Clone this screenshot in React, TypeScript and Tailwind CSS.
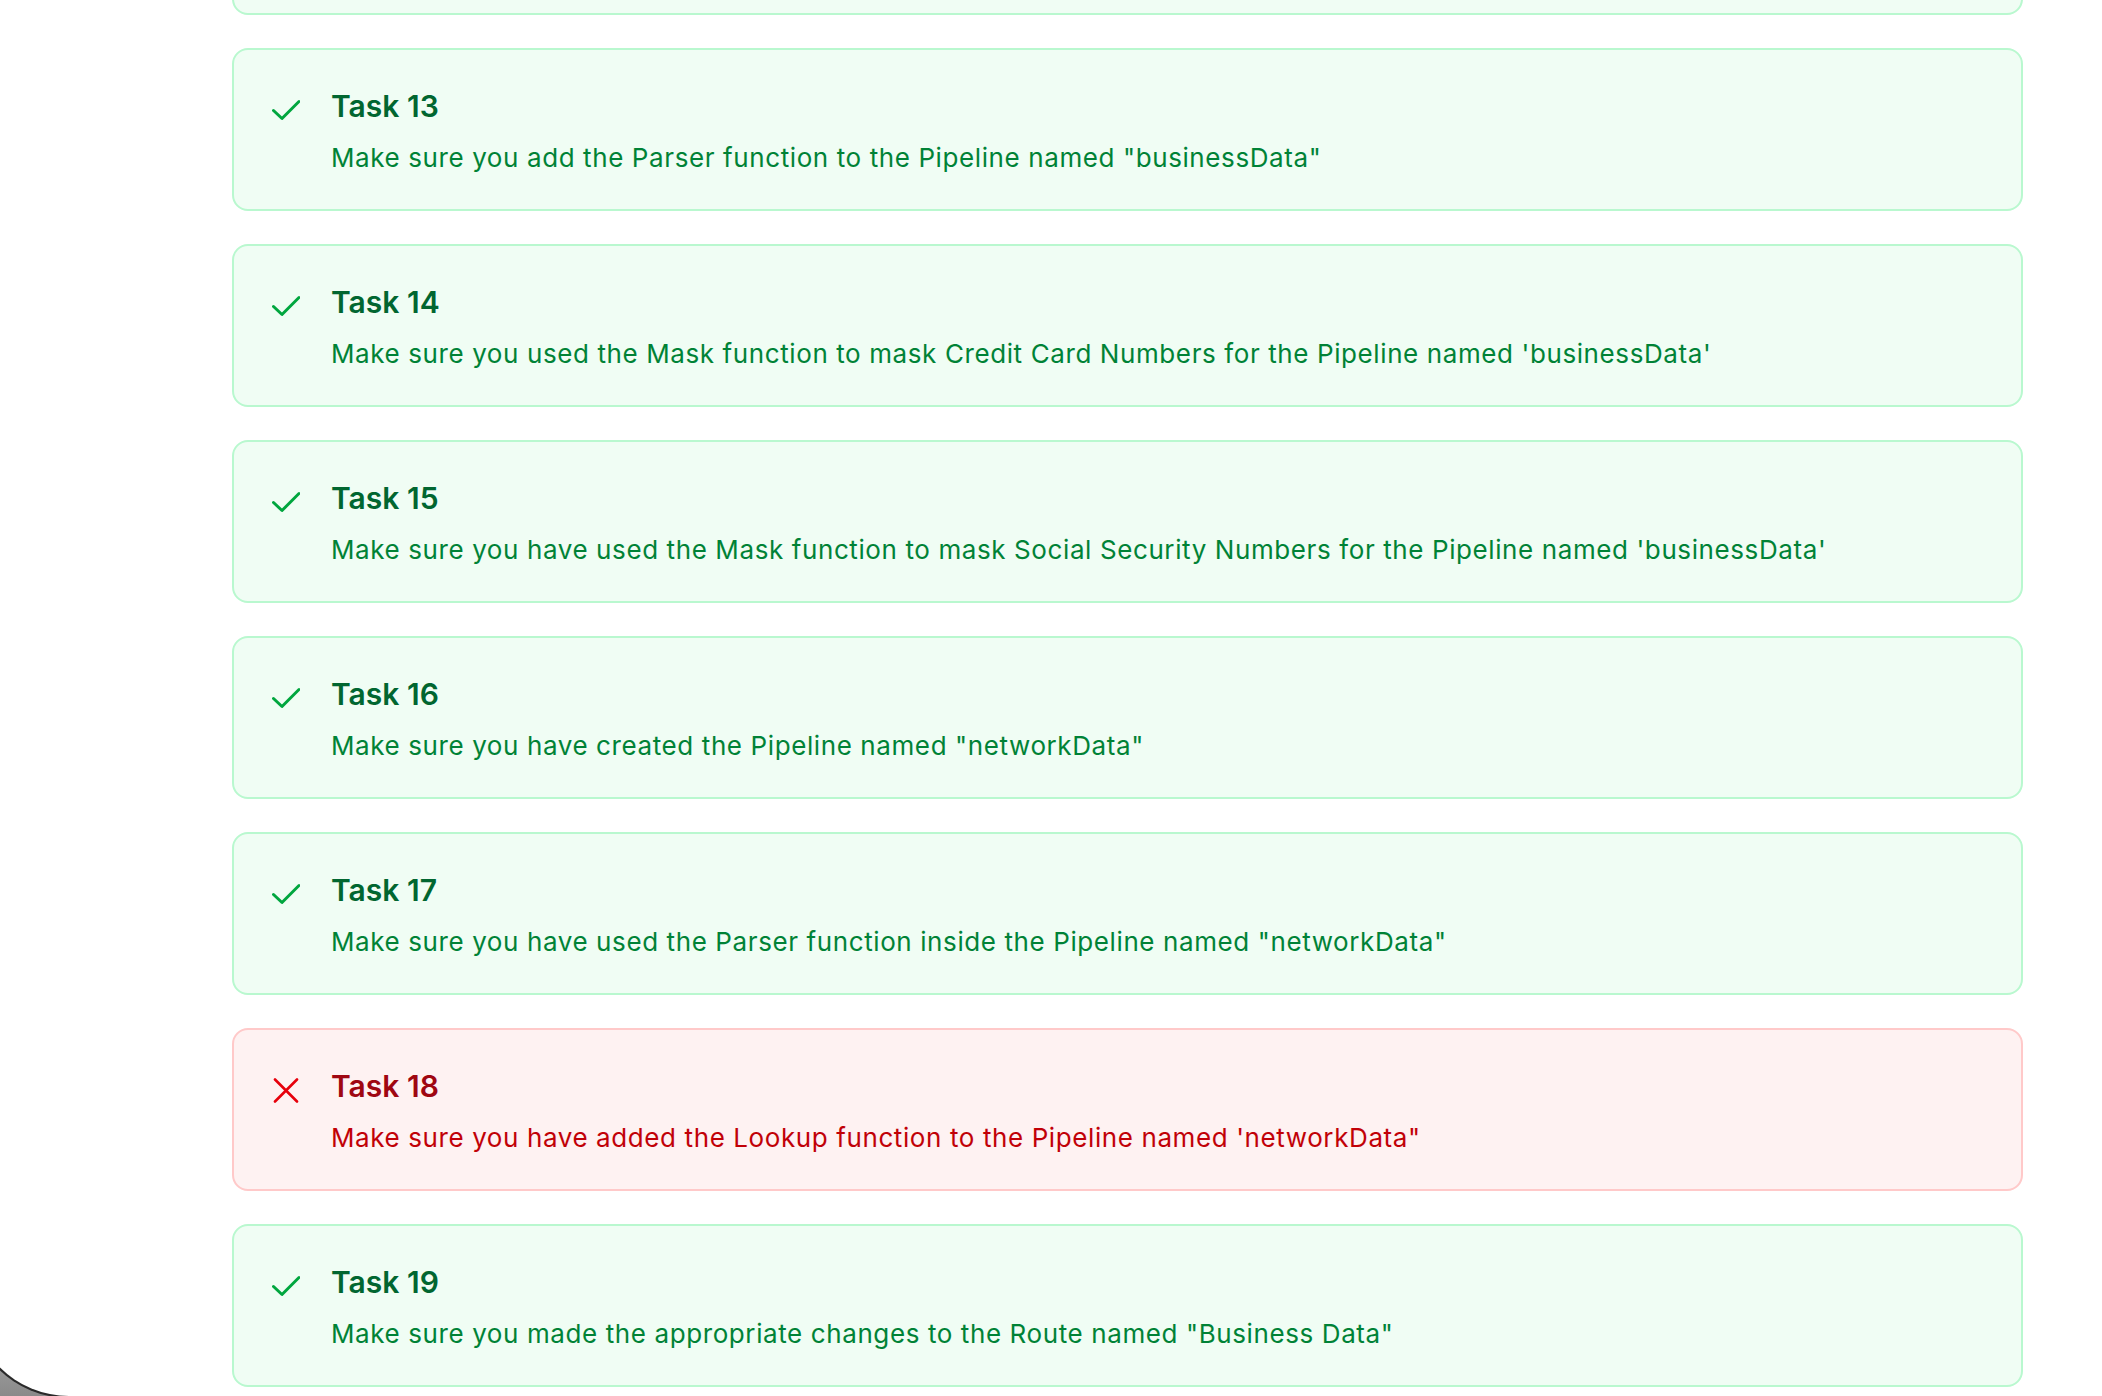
type Status = "pass" | "fail";

type Task = {
  id: number;
  status: Status;
  text: string;
};

const tasks: Task[] = [
  { id: 13, status: "pass", text: 'Make sure you add the Parser function to the Pipeline named "businessData"' },
  {
    id: 14,
    status: "pass",
    text: "Make sure you used the Mask function to mask Credit Card Numbers for the Pipeline named 'businessData'",
  },
  {
    id: 15,
    status: "pass",
    text: "Make sure you have used the Mask function to mask Social Security Numbers for the Pipeline named 'businessData'",
  },
  { id: 16, status: "pass", text: 'Make sure you have created the Pipeline named "networkData"' },
  { id: 17, status: "pass", text: 'Make sure you have used the Parser function inside the Pipeline named "networkData"' },
  {
    id: 18,
    status: "fail",
    text: "Make sure you have added the Lookup function to the Pipeline named 'networkData\"",
  },
  { id: 19, status: "pass", text: 'Make sure you made the appropriate changes to the Route named "Business Data"' },
];

function CheckMark() {
  return (
    <svg width="28" height="28" viewBox="0 0 28 28" fill="none" className="shrink-0 text-green-600">
      <polyline
        points="1.5,12.5 10,20.5 27,3.5"
        stroke="currentColor"
        strokeWidth="3"
        strokeLinecap="round"
        strokeLinejoin="round"
      />
    </svg>
  );
}

function Cross() {
  return (
    <svg width="28" height="28" viewBox="0 0 28 28" fill="none" className="shrink-0 text-red-600">
      <path d="M3 1.5L25 23.5M25 1.5L3 23.5" stroke="currentColor" strokeWidth="2.6" strokeLinecap="round" />
    </svg>
  );
}

function TaskCard({ task }: { task: Task }) {
  const ok = task.status === "pass";
  return (
    <div
      className={
        ok
          ? "flex gap-[31px] rounded-[16px] border-2 border-green-200 bg-green-50 pl-[38px] pr-8 pt-[38px] pb-[35px]"
          : "flex gap-[31px] rounded-[16px] border-2 border-red-200 bg-red-50 pl-[38px] pr-8 pt-[38px] pb-[35px]"
      }
    >
      <div className="mt-[10px]">{ok ? <CheckMark /> : <Cross />}</div>
      <div className="flex flex-col">
        <h3
          className={
            ok
              ? "text-[30px] leading-[36px] font-semibold text-green-800"
              : "text-[30px] leading-[36px] font-semibold text-red-800"
          }
        >
          Task {task.id}
        </h3>
        <p
          className={
            ok
              ? "mt-[18px] text-[26px] leading-[32px] tracking-[0.6px] text-green-700"
              : "mt-[18px] text-[26px] leading-[32px] tracking-[0.6px] text-red-700"
          }
        >
          {task.text}
        </p>
      </div>
    </div>
  );
}

export default function App() {
  return (
    <div className="relative h-screen w-full overflow-hidden bg-white font-['Inter',sans-serif]">
      <div className="-mt-[148px] flex flex-col gap-[33px] pl-[232px] pr-[79px]">
        {/* previous task, scrolled out of view above */}
        <div className="h-[163px] rounded-[16px] border-2 border-green-200 bg-green-50" />
        {tasks.map((task) => (
          <TaskCard key={task.id} task={task} />
        ))}
      </div>

      {/* window corner peeking in at the bottom left */}
      <div className="absolute bottom-0 left-0 h-[120px] w-[120px] overflow-hidden bg-gradient-to-b from-[#c4c4c4] to-[#8a8a8a]">
        <div className="absolute -bottom-[2px] -left-[31px] h-[200px] w-[200px] rounded-bl-[100px] border-b-2 border-l-2 border-[#2a2a2a] bg-white" />
      </div>
    </div>
  );
}
